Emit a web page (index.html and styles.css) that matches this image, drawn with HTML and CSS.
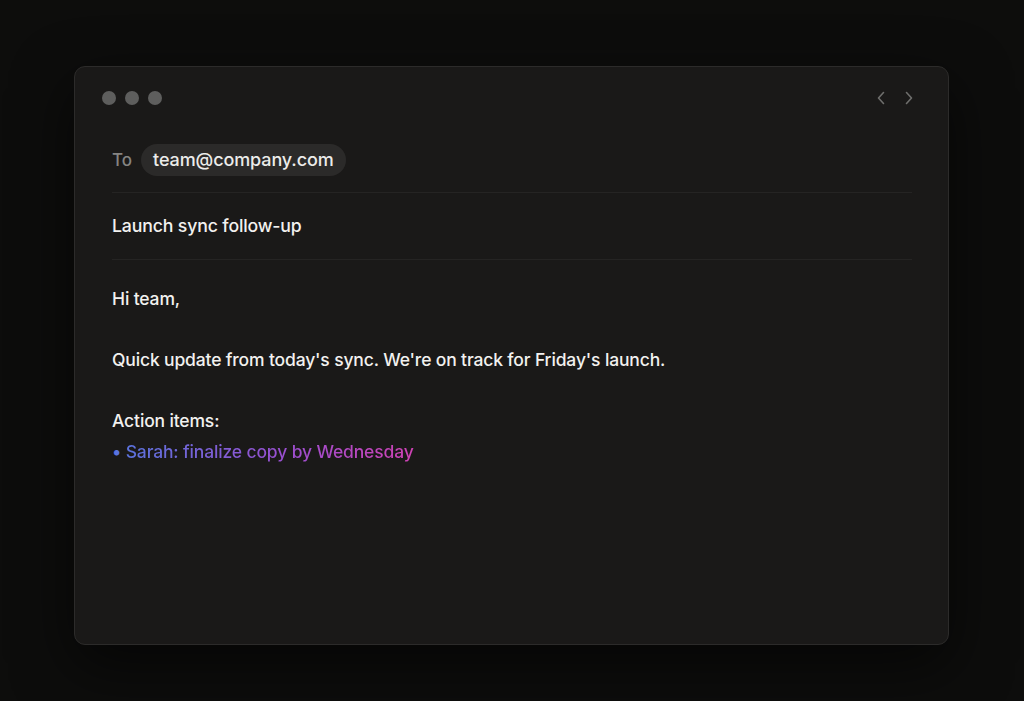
FILE: index.html
```html
<!DOCTYPE html>
<html>
<head>
<meta charset="utf-8">
<link rel="stylesheet" href="styles.css">
</head>
<body>
<div class="stage">
  <div class="window">
    <div class="titlebar">
      <div class="dots"><span class="dot"></span><span class="dot"></span><span class="dot"></span></div>
      <div class="nav">
        <svg width="12" height="16" viewBox="0 0 12 16"><path d="M8.5 2.5 L3.5 8 L8.5 13.5" fill="none" stroke="#6e6e6c" stroke-width="1.6" stroke-linecap="round" stroke-linejoin="round"/></svg>
        <svg width="12" height="16" viewBox="0 0 12 16"><path d="M3.5 2.5 L8.5 8 L3.5 13.5" fill="none" stroke="#6e6e6c" stroke-width="1.6" stroke-linecap="round" stroke-linejoin="round"/></svg>
      </div>
    </div>
    <div class="to-row">
      <span class="to-label">To</span>
      <span class="pill">team@company.com</span>
    </div>
    <div class="subject">Launch sync follow-up</div>
    <div class="body">
      <p class="para">Hi team,</p>
      <p class="para">Quick update from today's sync. We're on track for Friday's launch.</p>
      <p class="line">Action items:</p>
      <p class="line"><span class="bullet">•</span> <span class="grad">Sarah: finalize copy by Wednesday</span></p>
    </div>
  </div>
</div>
</body>
</html>
```

FILE: styles.css
```css
html, body {
  margin: 0;
  padding: 0;
  background: #0d0d0c;
  height: 100%;
}
body {
  font-family: Inter, "Noto Sans", sans-serif;
  -webkit-font-smoothing: antialiased;
}
.stage {
  padding: 66px 0 0 74px;
}
.window {
  box-sizing: border-box;
  width: 875px;
  height: 579px;
  background: #1a1918;
  border: 1px solid #2c2b2a;
  border-radius: 11px;
  box-shadow: 0 20px 60px rgba(0,0,0,0.6);
  padding: 23px 33px 0 27px;
}
.titlebar {
  display: flex;
  align-items: center;
  justify-content: space-between;
  height: 16px;
}
.dots {
  display: flex;
  gap: 9px;
}
.dot {
  width: 14px;
  height: 14px;
  border-radius: 50%;
  background: #5e5e5d;
}
.nav {
  display: flex;
  gap: 16px;
  align-items: center;
}
.nav svg { display: block; }
.to-row {
  display: flex;
  align-items: center;
  gap: 9px;
  margin: 38px 3px 0 10px;
  height: 32px;
  padding-bottom: 16px;
  border-bottom: 1px solid #252423;
}
.to-label {
  color: #858482;
  font-size: 17px;
  font-weight: 500;
}
.pill {
  background: #2b2a29;
  border-radius: 16px;
  height: 32px;
  line-height: 32px;
  padding: 0 12px;
  color: #ececea;
  font-size: 18px;
  font-weight: 500;
  letter-spacing: -0.1px;
}
.subject {
  margin: 0 3px 0 10px;
  padding: 21px 0 21px;
  line-height: 24px;
  font-size: 17.7px;
  font-weight: 500;
  color: #f2f1ef;
  letter-spacing: -0.15px;
  border-bottom: 1px solid #252423;
}
.body {
  margin-left: 10px;
  padding-top: 23px;
  font-size: 17.5px;
  font-weight: 500;
  color: #f2f1ef;
  letter-spacing: -0.15px;
}
.body p { margin: 0; line-height: 31px; }
.body .para { margin-bottom: 30px; }
.bullet { color: #5a74e0; }
.grad {
  background: linear-gradient(90deg, #5a72dc 0%, #9a4fd0 55%, #cf42b4 100%);
  -webkit-background-clip: text;
  background-clip: text;
  color: transparent;
}
```
